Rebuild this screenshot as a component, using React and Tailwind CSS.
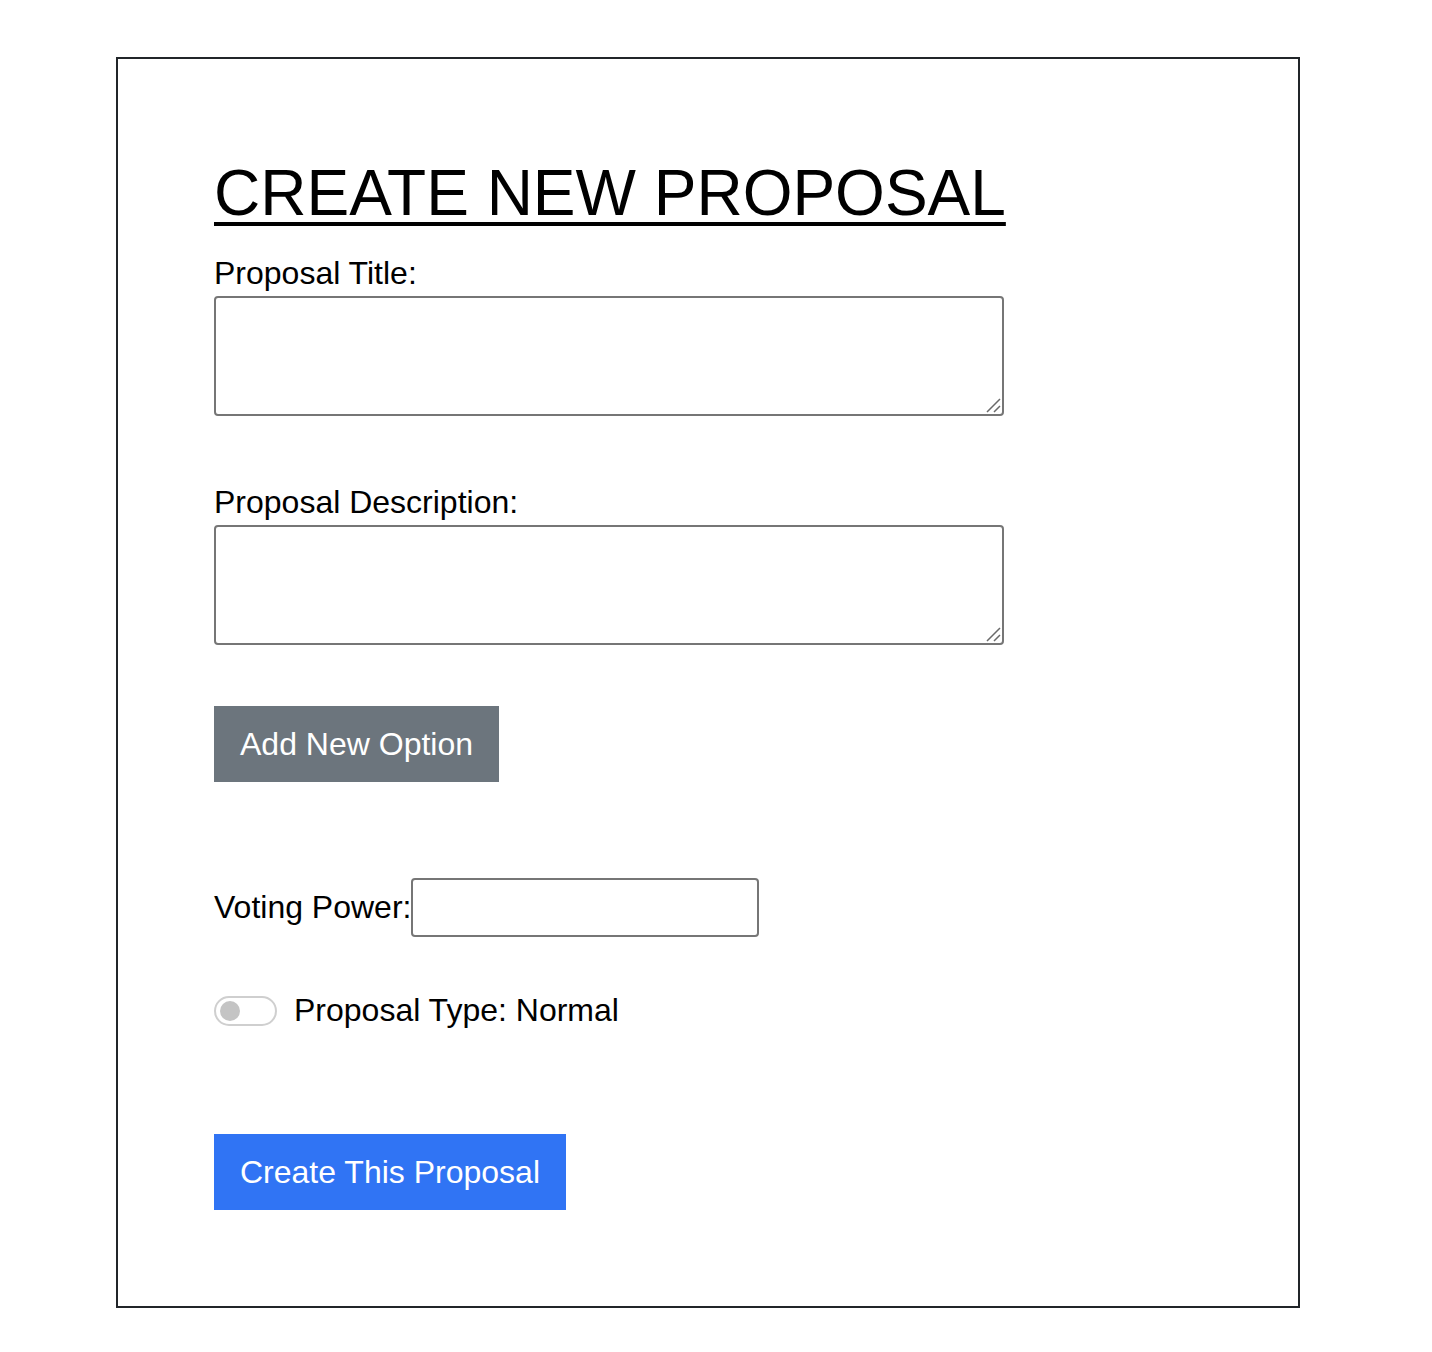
import React, { useState } from 'react';

const font = { fontFamily: '"Liberation Sans", Arial, Helvetica, sans-serif' };

const Grip = () => (
  <svg className="pointer-events-none absolute bottom-[3px] right-[3px]" width="16" height="16" viewBox="0 0 16 16">
    <path d="M2 15 L15 2 M9 15 L15 9" stroke="#6a6a6a" strokeWidth="1.5" />
  </svg>
);

export default function App() {
  const [special, setSpecial] = useState(false);

  return (
    <div className="min-h-[1352px] bg-white text-black" style={font}>
      <div className="ml-[116px] mt-[57px] w-[1184px] border-2 border-[#212529] pl-[96px] pt-[96px] pb-[96px]">
        <h1 className="text-[64px] leading-[76px] underline decoration-[4px] underline-offset-[7px]">
          CREATE NEW PROPOSAL
        </h1>

        {/* Title */}
        <label className="mt-[24px] block text-[32px] leading-[37px]">Proposal Title:</label>
        <div className="relative mt-[4px] w-[790px]">
          <textarea className="block h-[120px] w-[790px] resize-none rounded-[4px] border-2 border-[#767676] bg-white" />
          <Grip />
        </div>

        {/* Description */}
        <label className="mt-[68px] block text-[32px] leading-[37px]">Proposal Description:</label>
        <div className="relative mt-[4px] w-[790px]">
          <textarea className="block h-[120px] w-[790px] resize-none rounded-[4px] border-2 border-[#767676] bg-white" />
          <Grip />
        </div>

        <button className="mt-[61px] block h-[76px] bg-[#6c757d] px-[26px] text-[32px] leading-[48px] text-white">
          Add New Option
        </button>

        {/* Voting power */}
        <div className="mt-[96px] flex items-center">
          <span className="text-[32px] leading-[37px]">Voting Power:</span>
          <input type="text" className="h-[59px] w-[348px] rounded-[4px] border-2 border-[#767676] bg-white" />
        </div>

        {/* Proposal type toggle */}
        <div className="mt-[55px] flex items-center">
          <button
            onClick={() => setSpecial(!special)}
            className="relative h-[30px] w-[63px] rounded-full border-2 border-[#cfcfcf] bg-white"
          >
            <span className={`absolute top-[3px] h-[20px] w-[20px] rounded-full bg-[#c4c4c4] ${special ? 'left-[37px]' : 'left-[4px]'}`} />
          </button>
          <span className="ml-[17px] text-[32px] leading-[37px]">Proposal Type: {special ? 'Special' : 'Normal'}</span>
        </div>

        <button className="mt-[105px] block h-[76px] bg-[#3074f4] px-[26px] text-[32px] leading-[48px] text-white">
          Create This Proposal
        </button>
      </div>
    </div>
  );
}
